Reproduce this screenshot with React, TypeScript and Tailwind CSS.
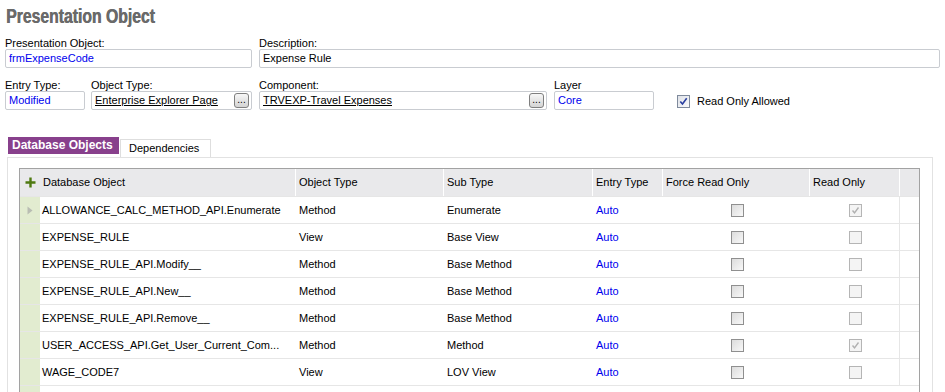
import React from 'react';

const rows = [
  { name: 'ALLOWANCE_CALC_METHOD_API.Enumerate', type: 'Method', sub: 'Enumerate', ro: true, current: true },
  { name: 'EXPENSE_RULE', type: 'View', sub: 'Base View', ro: false },
  { name: 'EXPENSE_RULE_API.Modify__', type: 'Method', sub: 'Base Method', ro: false },
  { name: 'EXPENSE_RULE_API.New__', type: 'Method', sub: 'Base Method', ro: false },
  { name: 'EXPENSE_RULE_API.Remove__', type: 'Method', sub: 'Base Method', ro: false },
  { name: 'USER_ACCESS_API.Get_User_Current_Com...', type: 'Method', sub: 'Method', ro: true },
  { name: 'WAGE_CODE7', type: 'View', sub: 'LOV View', ro: false },
];

const font = { fontFamily: '"Liberation Sans", Arial, sans-serif' };

const Label: React.FC<{ children: React.ReactNode }> = ({ children }) => (
  <div className="text-[11px] leading-[12px] text-black h-[12px]">{children}</div>
);

const Field: React.FC<{ value: string; blue?: boolean; underline?: boolean; lov?: boolean; className?: string }> = ({
  value,
  blue,
  underline,
  lov,
  className,
}) => (
  <div
    className={`h-[19px] border border-[#c9ccd1] rounded-[2px] bg-white flex items-center pl-[3px] pr-[2px] text-[11px] ${
      blue ? 'text-[#0000ee]' : 'text-black'
    } ${className ?? ''}`}
  >
    <span className={`flex-1 truncate ${underline ? 'underline' : ''}`}>{value}</span>
    {lov && (
      <span className="w-[15px] h-[15px] border border-[#7f7f7f] rounded-[3px] bg-gradient-to-b from-[#f7f7f7] to-[#d4d4d4] flex items-end justify-center text-[10px] leading-[10px] pb-[2px] text-black">
        ...
      </span>
    )}
  </div>
);

const ForceBox = () => (
  <span className="block w-[13px] h-[13px] border border-[#8f8f8f] bg-gradient-to-br from-[#dcdcdc] to-[#f8f8f8]" />
);

const RoBox: React.FC<{ checked: boolean }> = ({ checked }) => (
  <span className="w-[13px] h-[13px] border border-[#b5b5b5] bg-[#f4f4f4] flex items-center justify-center">
    {checked && (
      <svg width="9" height="9" viewBox="0 0 9 9">
        <path d="M1.5 4.5 L3.5 6.8 L7.5 1.5" stroke="#b0b0b0" strokeWidth="1.4" fill="none" />
      </svg>
    )}
  </span>
);

const cols = 'grid grid-cols-[20px_256px_148px_149px_70px_147px_90px_1fr]';

export default function App() {
  return (
    <div className="w-[945px] h-[392px] bg-white overflow-hidden relative" style={font}>
      <div className="pl-[6px] pt-[0px] h-[30px]">
        <span className="inline-block origin-left scale-x-[0.75] text-[21px] font-bold text-[#6a6a6a] whitespace-nowrap [text-shadow:0.6px_0_0_#6a6a6a]">
          Presentation Object
        </span>
      </div>

      <div className="flex gap-[7px] pl-[5px] pr-[5px] mt-[7px]">
        <div className="w-[247px]">
          <Label>Presentation Object:</Label>
          <Field value="frmExpenseCode" blue />
        </div>
        <div className="flex-1">
          <Label>Description:</Label>
          <Field value="Expense Rule" />
        </div>
      </div>

      <div className="flex pl-[5px] mt-[11px] items-start">
        <div className="w-[80px]">
          <Label>Entry Type:</Label>
          <Field value="Modified" blue />
        </div>
        <div className="w-[161px] ml-[6px]">
          <Label>Object Type:</Label>
          <Field value="Enterprise Explorer Page" underline lov />
        </div>
        <div className="w-[288px] ml-[7px]">
          <Label>Component:</Label>
          <Field value="TRVEXP-Travel Expenses" underline lov />
        </div>
        <div className="w-[100px] ml-[7px]">
          <Label>Layer</Label>
          <Field value="Core" blue />
        </div>
        <div className="flex items-center ml-[23px] mt-[14px] gap-[7px]">
          <span className="w-[13px] h-[13px] border border-[#7f8a9c] bg-gradient-to-br from-[#dfe2e8] to-[#f9f9fb] flex items-center justify-center">
            <svg width="9" height="9" viewBox="0 0 9 9">
              <path d="M1.3 4.4 L3.5 7 L7.7 1.3" stroke="#2a3fa0" strokeWidth="1.6" fill="none" />
            </svg>
          </span>
          <span className="text-[11px] text-black">Read Only Allowed</span>
        </div>
      </div>

      <div className="flex items-start pl-[8px] mt-[27px]">
        <div className="h-[17px] w-[111px] bg-[#88408c] text-white font-bold text-[12px] leading-[17px] pl-[4px]">
          Database Objects
        </div>
        <div className="h-[18px] w-[91px] mt-[2px] ml-[1px] border border-[#dedede] border-b-0 text-[11px] leading-[17px] pl-[8px] text-black">
          Dependencies
        </div>
      </div>

      <div className="ml-[7px] w-[926px] h-[300px] border border-[#e2e2e2] pl-[11px] pt-[10px]">
        <div className="w-[901px] border border-[#a2a2a2] border-b-0 text-[11px] text-black">
          <div className={`${cols} h-[27px] bg-[#e9e9eb]`}>
            <div className="flex items-center justify-center">
              <svg width="11" height="11" viewBox="0 0 11 11">
                <path d="M5.5 0.5 V10.5 M0.5 5.5 H10.5" stroke="#4f7a12" strokeWidth="2.4" />
              </svg>
            </div>
            {['Database Object', 'Object Type', 'Sub Type', 'Entry Type', 'Force Read Only', 'Read Only'].map((h) => (
              <div key={h} className="flex items-center pl-[3px] border-r border-white">
                {h}
              </div>
            ))}
            <div />
          </div>
          {rows.map((r) => (
            <div key={r.name} className={`${cols} h-[27px] border-t border-[#e6e6e6]`}>
              <div className="bg-[#e2ecd0] flex items-center justify-center">
                {r.current && (
                  <svg width="6" height="9" viewBox="0 0 6 9">
                    <path d="M0.5 0.5 L5.5 4.5 L0.5 8.5 Z" fill="#b9bdb3" />
                  </svg>
                )}
              </div>
              <div className="flex items-center pl-[2px] whitespace-nowrap overflow-hidden">{r.name}</div>
              <div className="flex items-center pl-[3px]">{r.type}</div>
              <div className="flex items-center pl-[3px]">{r.sub}</div>
              <div className="flex items-center pl-[3px] text-[#0000ee]">Auto</div>
              <div className="flex items-center justify-center pl-[1px]">
                <ForceBox />
              </div>
              <div className="flex items-center justify-center border-r border-[#e6e6e6] pl-[1px]">
                <RoBox checked={r.ro} />
              </div>
              <div />
            </div>
          ))}
          <div className={`${cols} h-[27px] border-t border-[#e6e6e6]`}>
            <div className="bg-[#e2ecd0]" />
          </div>
        </div>
      </div>
    </div>
  );
}
